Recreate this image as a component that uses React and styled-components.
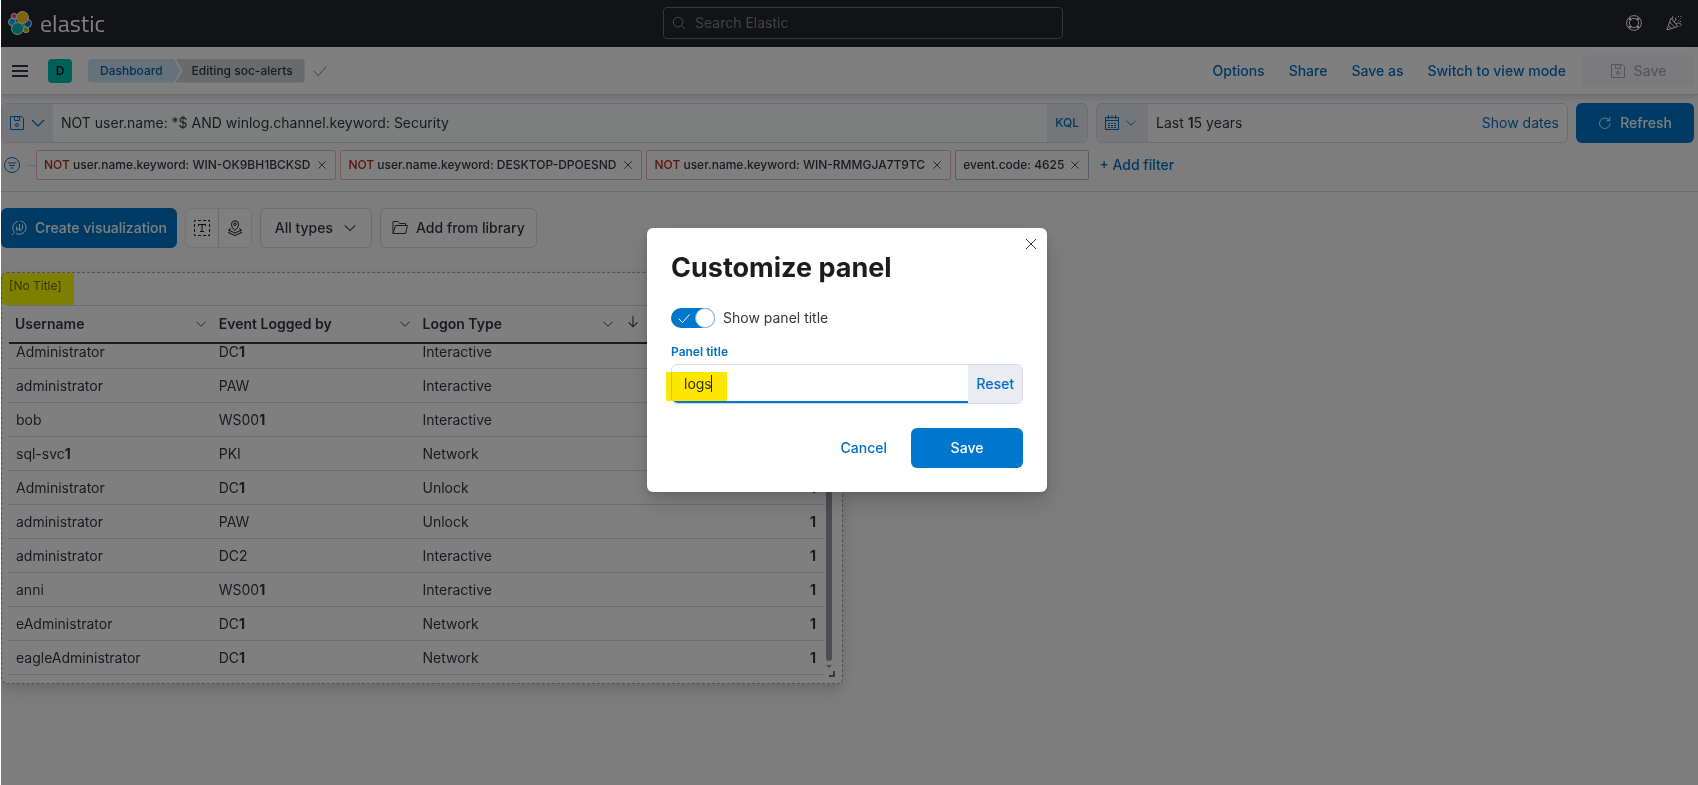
import React from "react";
import styled, { createGlobalStyle, css } from "styled-components";

const GlobalStyle = createGlobalStyle`
  *, *::before, *::after { box-sizing: border-box; }
  body {
    margin: 0;
    background: #fff;
    color: #343741;
    font: 400 14px/20px Inter, "Liberation Sans", sans-serif;
  }
  button, input { font: inherit; color: inherit; }
  button { cursor: pointer; border: 0; background: none; padding: 0; }
  a { color: inherit; text-decoration: none; }
  h1 { margin: 0; }
`;

const Page = styled.div`
  min-height: 100vh;
  margin-left: 1px;
  background: #fafbfd;
  overflow: hidden;
`;

const TopBar = styled.header`
  display: flex;
  align-items: center;
  height: 47px;
  padding: 0 16px 1px 7px;
  background: #25262e;
`;

const Brand = styled.a`
  display: flex;
  flex: 1;
  align-items: center;
  gap: 8px;
  color: #fff;
  font: 400 24px/32px "Titillium Web", "Noto Sans", sans-serif;
`;

const SearchField = styled.label`
  display: flex;
  align-items: center;
  gap: 9px;
  width: 400px;
  height: 32px;
  margin-left: 36px;
  padding: 0 8px;
  border: 1px solid #6d6e75;
  border-radius: 4px;
  color: #98a2b3;
  input {
    flex: 1;
    min-width: 0;
    border: 0;
    padding: 0;
    outline: 0;
    background: none;
  }
  input::placeholder { color: #81858f; opacity: 1; }
`;

const TopActions = styled.div`
  display: flex;
  flex: 1;
  justify-content: flex-end;
  gap: 24px;
`;

const NavBar = styled.nav`
  position: relative;
  display: flex;
  align-items: center;
  height: 48px;
  padding: 0 4px 0 11px;
  background: #fff;
  border-bottom: 1px solid #d3dae6;
  box-shadow: 0 2px 4px rgba(0, 0, 0, 0.08), 0 4px 12px rgba(0, 0, 0, 0.05);
`;

const IconButton = styled.button`
  display: flex;
  align-items: center;
  color: ${(p) => (p.$light ? "#fff" : "#343741")};
`;

const SpaceBadge = styled.button`
  width: 24px;
  height: 24px;
  margin: 0 16px 0 20px;
  border-radius: 4px;
  background: #00bfb3;
  color: #000;
  font-size: 12px;
  font-weight: 500;
`;

const Crumb = styled.a`
  height: 24px;
  padding: 0 18px 0 12px;
  border-radius: 4px 0 0 4px;
  background: #cce4f5;
  color: #0061a6;
  font-size: 12px;
  font-weight: 500;
  line-height: 24px;
  clip-path: polygon(0 0, calc(100% - 7px) 0, 100% 50%, calc(100% - 7px) 100%, 0 100%);
  ${(p) =>
    p.$current &&
    css`
      margin: 0 8px 0 -5px;
      padding: 0 12px 0 16px;
      border-radius: 0 4px 4px 0;
      background: #d3d5d9;
      color: #343741;
      clip-path: polygon(0 0, 100% 0, 100% 100%, 0 100%, 7px 50%);
    `}
`;

const NavLinks = styled.div`
  display: flex;
  align-items: center;
  gap: 24px;
  margin-left: auto;
  color: #0071c2;
  font-weight: 500;
`;

const Button = styled.button`
  display: flex;
  align-items: center;
  justify-content: center;
  gap: ${(p) => (p.$roomy ? 10 : 8)}px;
  height: 40px;
  padding: 0 ${(p) => (p.$roomy ? 14 : p.$outlined ? 11 : 10)}px;
  border-radius: 6px;
  font-weight: 500;
  white-space: nowrap;
  ${(p) => p.$primary && css`background: #0077cc; color: #fff;`}
  ${(p) => p.$outlined && css`background: #fff; border: 1px solid #d3dae6;`}
  ${(p) => p.$small && css`height: 32px; border-radius: 4px; background: #f6f7fa; color: #a8adb8;`}
  ${(p) => p.$wide && css`width: 112px;`}
`;

const SaveTop = styled(Button)`
  margin-left: -8px;
`;

const QueryRow = styled.div`
  display: flex;
  gap: 8px;
  padding: 8px 4px 7px 0;
`;

const FieldGroup = styled.div`
  display: flex;
  align-items: stretch;
  flex: ${(p) => (p.$grow ? "1" : "0 0 472px")};
  height: 40px;
  border: 1px solid #d3dae6;
  border-radius: 6px;
  background: ${(p) => (p.$grow ? "#fbfcfd" : "#fff")};
  overflow: hidden;
`;

const Prepend = styled.button`
  display: flex;
  align-items: center;
  gap: 5px;
  width: 51px;
  padding-left: 7px;
  background: #e9edf3;
  color: #0071c2;
`;

const Append = styled.button`
  padding: 0 8px;
  background: #e9edf3;
  color: #0071c2;
  font-weight: 500;
  font-size: ${(p) => (p.$small ? "12px" : "14px")};
`;

const TextInput = styled.input`
  flex: 1;
  min-width: 0;
  padding: 0 8px;
  border: 0;
  outline: 0;
  background: transparent;
`;

const DateLabel = styled.button`
  flex: 1;
  padding: 0 8px;
  text-align: left;
  b { font-weight: 600; }
`;

const ShowDates = styled.button`
  padding: 0 8px;
  color: #0071c2;
`;

const RefreshButton = styled(Button)`
  width: 118px;
`;

const FilterRow = styled.div`
  display: flex;
  align-items: center;
  gap: 4px;
  padding: 0 4px 11px 3px;
  border-bottom: 1px solid #d3dae6;
`;

const FilterMenu = styled.button`
  display: flex;
  align-items: center;
  gap: 6px;
  margin-right: -4px;
  color: #0071c2;
  &::after {
    content: "";
    width: 10px;
    height: 1px;
    background: #d3dae6;
  }
`;

const Pill = styled.span`
  display: flex;
  align-items: center;
  gap: ${(p) => (p.$negated ? 6 : 5)}px;
  height: 30px;
  padding: 0 7px;
  border: 1px solid ${(p) => (p.$negated ? "#efb5b1" : "#b5bcc9")};
  border-radius: 2px;
  background: #fff;
  font-size: 12px;
  font-weight: 500;
  white-space: nowrap;
  em { color: #bd271e; font-style: normal; }
  button { display: flex; color: #535966; }
`;

const AddFilter = styled.button`
  margin-left: 6px;
  color: #0071c2;
  font-weight: 500;
`;

const Toolbar = styled.div`
  display: flex;
  gap: 8px;
  padding: 16px 0 24px;
`;

const IconGroup = styled.div`
  display: flex;
  width: 67px;
  border-radius: 6px;
  border: 1px solid #e3e7ef;
  background: #fff;
  color: #1a1c21;
  button {
    display: flex;
    flex: 1;
    align-items: center;
    justify-content: center;
  }
  button + button { border-left: 1px solid #d3dae6; }
`;

const Panel = styled.section`
  position: relative;
  width: 842px;
  max-width: 100%;
  padding: 0 18px 8px 7px;
  border: 1px dashed #98a2b3;
  border-radius: 6px;
  background: #fff;
  box-shadow: 0 4px 8px rgba(0, 0, 0, 0.1), 0 10px 20px rgba(0, 0, 0, 0.07);
`;

const PanelTitle = styled.h2`
  margin: 0;
  height: 32px;
  padding-top: 3px;
  color: #69707d;
  font-size: 12px;
  font-weight: 400;
`;

const Highlight = styled.mark`
  position: absolute;
  mix-blend-mode: multiply;
  pointer-events: none;
  ${(p) =>
    p.$title
      ? css`left: -1px; top: 0; width: 73px; height: 32px; background: #ff0; border-radius: 6px 0 0 6px;`
      : css`left: -6px; top: 7px; width: 61px; height: 29px; background: #ffe600;`}
`;

const Table = styled.table`
  width: 100%;
  table-layout: fixed;
  border-collapse: separate;
  border-spacing: 0;
  th {
    height: 39px;
    padding: 0 6px;
    border-top: 1px solid #d3dae6;
    border-bottom: 2px solid #343741;
    color: #343741;
    font-weight: 600;
    text-align: left;
  }
  td {
    padding: 9px 8px 8px 6px;
    border-bottom: 1px solid #d3dae6;
    line-height: 16px;
  }
  tr:first-child td { padding-top: 0; }
  td:first-child { padding-left: 7px; }
  td:last-child { text-align: right; }
  td b { font-weight: 700; }
`;

const HeadCell = styled.div`
  display: flex;
  align-items: center;
  justify-content: space-between;
`;

const ScrollThumb = styled.i`
  position: absolute;
  top: 72px;
  right: 10px;
  bottom: 22px;
  width: 6px;
  border-radius: 3px;
  background: #989ba5;
`;

const ResizeHandle = styled.i`
  position: absolute;
  right: 7px;
  bottom: 6px;
  width: 6px;
  height: 6px;
  border: solid #69707d;
  border-width: 0 2px 2px 0;
`;

const ScrollArrow = styled.i`
  position: absolute;
  right: 10px;
  bottom: 15px;
  border: 3px solid transparent;
  border-top-color: #989ba5;
  border-bottom: 0;
`;

const Mask = styled.div`
  position: fixed;
  inset: 0 0 0 1px;
  display: flex;
  align-items: center;
  justify-content: center;
  padding: 0 5px 65px 0;
  background: rgba(0, 0, 0, 0.5);
`;

const Modal = styled.form`
  position: relative;
  width: 400px;
  padding: 24px;
  border-radius: 6px;
  background: #fff;
  box-shadow: 0 3px 9px rgba(0, 0, 0, 0.12), 0 12px 24px rgba(0, 0, 0, 0.14);
  h1 {
    margin-bottom: 24px;
    color: #1a1c21;
    font-size: 27px;
    font-weight: 700;
    line-height: 32px;
  }
`;

const CloseButton = styled.button`
  position: absolute;
  top: 8px;
  right: 8px;
  display: flex;
  color: #343741;
`;

const SwitchRow = styled.label`
  display: flex;
  align-items: center;
  gap: 8px;
  position: relative;
  margin-bottom: 16px;
  input {
    position: absolute;
    width: 44px;
    height: 20px;
    margin: 0;
    opacity: 0;
  }
`;

const Track = styled.span`
  display: flex;
  align-items: center;
  justify-content: space-between;
  width: 44px;
  height: 20px;
  padding-left: 5px;
  border-radius: 10px;
  background: #0077cc;
  color: #fff;
  &::after {
    content: "";
    width: 20px;
    height: 20px;
    border: 1px solid #9fbdd8;
    border-radius: 50%;
    background: #fff;
  }
`;

const FieldLabel = styled.label`
  display: block;
  margin-bottom: 4px;
  color: #0071c2;
  font-size: 12px;
  font-weight: 600;
  line-height: 16px;
`;

const TitleField = styled.div`
  position: relative;
  display: flex;
  height: 40px;
  margin-bottom: 24px;
  border: 1px solid #d3dae6;
  border-radius: 6px;
`;

const TitleInput = styled(TextInput)`
  padding: 0 12px;
  border-bottom-left-radius: 6px;
  background: linear-gradient(#0077cc, #0077cc) bottom / 100% 2px no-repeat;
  caret-color: transparent;
`;

const Caret = styled.i`
  position: absolute;
  top: 10px;
  left: 39px;
  width: 1px;
  height: 17px;
  background: #1a1c21;
`;

const Actions = styled.div`
  display: flex;
  justify-content: flex-end;
  gap: 14px;
`;

const CancelButton = styled(Button)`
  color: #0071c2;
`;

const Svg = ({ size = 16, children, ...rest }) => (
  <svg width={size} height={size} viewBox="0 0 16 16" fill="none" stroke="currentColor" aria-hidden="true" {...rest}>
    {children}
  </svg>
);
const Chevron = ({ size = 16 }) => <Svg size={size} strokeWidth="1.2"><path d="M2 5 8 11l6-6" /></Svg>;
const Cross = ({ size = 16 }) => <Svg size={size} strokeWidth={16 / size}><path d="m3 3 10 10M13 3 3 13" /></Svg>;
const Check = ({ size = 16 }) => <Svg size={size}><path d="m2.5 8.5 4 4 7-8" /></Svg>;
const SaveIcon = () => (
  <Svg><path d="M1.5 1.5h11l2 2v11h-13zM5.5 1.5v4h5v-4M8.5 2.5v1" /><circle cx="8" cy="10" r="1.5" /></Svg>
);
const MenuIcon = () => <Svg strokeWidth="2"><path d="M0 3h16M0 8h16M0 13h16" /></Svg>;
const SearchIcon = () => <Svg size={14}><circle cx="7" cy="7" r="5.5" /><path d="m11 11 4 4" /></Svg>;
const HelpIcon = () => (
  <Svg>
    <circle cx="8" cy="8" r="7.4" />
    <circle cx="8" cy="8" r="4.6" />
    <path strokeWidth="2.4" d="m3 3 2 2M13 3l-2 2M3 13l2-2M13 13l-2-2" />
  </Svg>
);
const CheerIcon = () => (
  <Svg>
    <path d="M5 3 .8 15l11-3.5zM3.5 7l5.300 5.300M2.300 10.500l3.300 3M6 4c1-1 1-2.500 0-3.200M7.800 7c2-1 2.500-2.500 2-4.500M10 9c1.500-1.500 4.500-1.500 5 .5 0 1-.5 1.700-1.500 2" />
    <path strokeDasharray="1 1.5" d="M12 1.500h3.500M12 6l3-3M14 6.500h2" />
  </Svg>
);
const CalendarIcon = () => (
  <Svg>
    <path d="M1.5 2.500h13v12h-13zM1.500 5.500h13M4.500 0v4M11.500 0v4M8 .5v3" />
    <path strokeDasharray="2 1" d="M4 8.500h8.500M4 10.500h8.500M4 12.500h8.500" />
  </Svg>
);
const RefreshIcon = () => (
  <Svg size={14}><path d="M13.700 8.500A6 6 0 1 1 11.500 3.700l2 1.800M13.500 1v4.500H9.500" /></Svg>
);
const FilterIcon = () => (
  <Svg><circle cx="8" cy="8" r="7.500" /><path d="M3.500 6h9M5 8.500h6M6.500 11h3" /></Svg>
);
const LensIcon = () => (
  <Svg>
    <path d="M3.500 12.300A6.700 6.700 0 0 1 7 1.200M9.500 1a6.700 6.700 0 1 1-4.300 12.500M.8 15.200l3-3" />
    <path d="M5.500 6.500v3.300q0 .7.700.7t.8-.7V8M8.500 4v6q0 .7.800.7T10 10V8.500M11.500 4.500v3.500q0 .8-.7.800" />
  </Svg>
);
const TextIcon = () => (
  <Svg>
    <path strokeDasharray="3 2" d="M.5 2V.5h15v15H.5V2" />
    <path d="M4.500 6V4.500h7V6M8 4.500v7M6 11.500h4" />
  </Svg>
);
const MapIcon = () => (
  <Svg>
    <path d="M8 10.500C5.500 8 4.500 6.500 4.500 4.200a3.500 3.500 0 0 1 7 0c0 2.300-1 3.800-3.500 6.300z" />
    <circle cx="8" cy="4.200" r="1.300" />
    <path d="M4 8.500 1.500 10 8 13l6.500-3L12 8.500M3 11.800l-1.500.8L8 15.500l6.500-2.900-1.500-.8" />
  </Svg>
);
const FolderIcon = () => (
  <Svg><path d="M1 13.500v-12h5l1.500 2h6v2M1 13.500 3.500 5.500h12l-2 8z" /></Svg>
);
const SortIcon = () => <Svg size={14} strokeWidth="1.2"><path d="M8 1.500v12M3 8.500l5 5 5-5" /></Svg>;
const ElasticLogo = () => (
  <svg width="24" height="24" viewBox="0 0 24 24" aria-hidden="true">
    <g stroke="#fff" strokeWidth="1">
      <circle cx="6" cy="5.200" r="2.800" fill="#f04e98" />
      <circle cx="4.300" cy="11" r="3.800" fill="#1ba9f5" />
      <circle cx="19.500" cy="12.500" r="4" fill="#0077cc" />
      <circle cx="18" cy="18.800" r="2.900" fill="#93c90e" />
      <circle cx="14.500" cy="6.500" r="6" fill="#fec514" />
      <circle cx="9.500" cy="17.500" r="6" fill="#00bfb3" />
    </g>
  </svg>
);

const filters = [
  { id: 1, negated: true, text: "user.name.keyword: WIN-OK9BH1BCKSD" },
  { id: 2, negated: true, text: "user.name.keyword: DESKTOP-DPOESND" },
  { id: 3, negated: true, text: "user.name.keyword: WIN-RMMGJA7T9TC" },
  { id: 4, negated: false, text: "event.code: 4625" },
];

const columns = ["Username", "Event Logged by", "Logon Type"];

const rows = [
  ["Administrator", "DC1", "Interactive", "1"],
  ["administrator", "PAW", "Interactive", "1"],
  ["bob", "WS001", "Interactive", "1"],
  ["sql-svc1", "PKI", "Network", "1"],
  ["Administrator", "DC1", "Unlock", "1"],
  ["administrator", "PAW", "Unlock", "1"],
  ["administrator", "DC2", "Interactive", "1"],
  ["anni", "WS001", "Interactive", "1"],
  ["eAdministrator", "DC1", "Network", "1"],
  ["eagleAdministrator", "DC1", "Network", "1"],
];

// Sets every digit one in bold
const Emphasized = ({ text }) =>
  text.split(/(1)/).map((part, i) => (part === "1" ? <b key={i}>1</b> : part));

export default function App() {
  return (
    <>
      <GlobalStyle />
      <Page>
        <TopBar>
          <Brand href="#home"><ElasticLogo />elastic</Brand>
          <SearchField>
            <SearchIcon />
            <input type="search" placeholder="Search Elastic" aria-label="Search Elastic" />
          </SearchField>
          <TopActions>
            <IconButton $light aria-label="Help"><HelpIcon /></IconButton>
            <IconButton $light aria-label="What's new"><CheerIcon /></IconButton>
          </TopActions>
        </TopBar>
        <NavBar>
          <IconButton aria-label="Menu"><MenuIcon /></IconButton>
          <SpaceBadge>D</SpaceBadge>
          <Crumb href="#dashboard">Dashboard</Crumb>
          <Crumb href="#editing" $current>Editing soc-alerts</Crumb>
          <Svg color="#69707d" size={14}><path d="m1 8 5 5.500L15 3" /></Svg>
          <NavLinks>
            <a href="#options">Options</a>
            <a href="#share">Share</a>
            <a href="#save-as">Save as</a>
            <a href="#view">Switch to view mode</a>
            <SaveTop $small $wide disabled><SaveIcon />Save</SaveTop>
          </NavLinks>
        </NavBar>
        <QueryRow>
          <FieldGroup $grow>
            <Prepend aria-label="Saved queries"><SaveIcon /><Chevron size={16} /></Prepend>
            <TextInput aria-label="Query" defaultValue="NOT user.name: *$ AND winlog.channel.keyword: Security" />
            <Append $small>KQL</Append>
          </FieldGroup>
          <FieldGroup>
            <Prepend aria-label="Date quick select"><CalendarIcon /><Chevron size={12} /></Prepend>
            <DateLabel>Last <Emphasized text="15 years" /></DateLabel>
            <ShowDates>Show dates</ShowDates>
          </FieldGroup>
          <RefreshButton $primary><RefreshIcon />Refresh</RefreshButton>
        </QueryRow>
        <FilterRow>
          <FilterMenu aria-label="Filter options"><FilterIcon /></FilterMenu>
          {filters.map((f) => (
            <Pill key={f.id} $negated={f.negated}>
              <span>{f.negated && <em>NOT </em>}{f.text}</span>
              <button aria-label="Remove filter"><Cross size={12} /></button>
            </Pill>
          ))}
          <AddFilter>+ Add filter</AddFilter>
        </FilterRow>
        <Toolbar>
          <Button $primary><LensIcon />Create visualization</Button>
          <IconGroup>
            <button aria-label="Add text"><TextIcon /></button>
            <button aria-label="Add map"><MapIcon /></button>
          </IconGroup>
          <Button $outlined $roomy>All types<Chevron size={14} /></Button>
          <Button $outlined><FolderIcon />Add from library</Button>
        </Toolbar>
        <Panel>
          <PanelTitle>[No Title]</PanelTitle>
          <Highlight $title />
          <Table>
            <thead>
              <tr>
                {columns.map((c) => (
                  <th key={c}><HeadCell>{c}<Chevron size={12} /></HeadCell></th>
                ))}
                <th aria-label="Count"><SortIcon /></th>
              </tr>
            </thead>
            <tbody>
              {rows.map((r, i) => (
                <tr key={i}>{r.map((c, j) => <td key={j}><Emphasized text={c} /></td>)}</tr>
              ))}
            </tbody>
          </Table>
          <ScrollThumb />
          <ScrollArrow />
          <ResizeHandle />
        </Panel>
      </Page>
      <Mask>
        <Modal role="dialog" aria-label="Customize panel" onSubmit={(e) => e.preventDefault()}>
          <CloseButton type="button" aria-label="Close"><Cross size={16} /></CloseButton>
          <h1>Customize panel</h1>
          <SwitchRow>
            <input type="checkbox" role="switch" defaultChecked />
            <Track><Check size={16} /></Track>
            Show panel title
          </SwitchRow>
          <FieldLabel htmlFor="panel-title">Panel title</FieldLabel>
          <TitleField>
            <TitleInput id="panel-title" defaultValue="logs" />
            <Append type="button">Reset</Append>
            <Highlight />
            <Caret />
          </TitleField>
          <Actions>
            <CancelButton type="button">Cancel</CancelButton>
            <Button $primary $wide>Save</Button>
          </Actions>
        </Modal>
      </Mask>
    </>
  );
}
